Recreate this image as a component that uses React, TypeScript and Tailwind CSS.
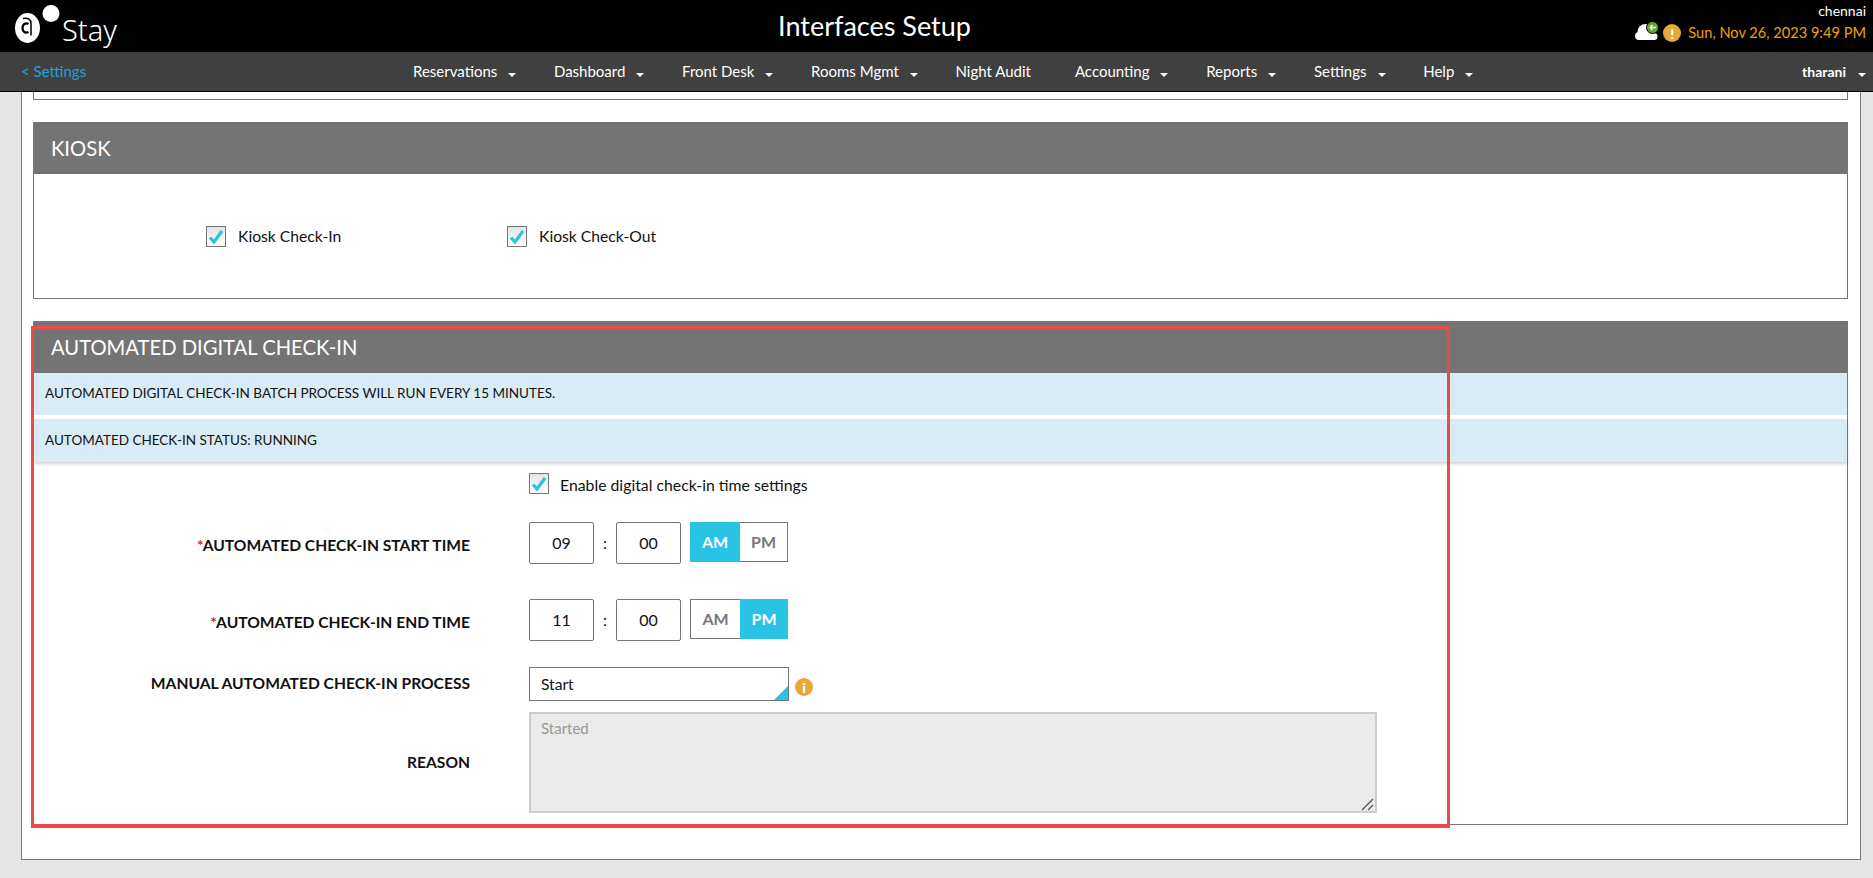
import React from 'react';

const NAV = [
  { label: 'Reservations', caret: true },
  { label: 'Dashboard', caret: true },
  { label: 'Front Desk', caret: true },
  { label: 'Rooms Mgmt', caret: true },
  { label: 'Night Audit', caret: false },
  { label: 'Accounting', caret: true },
  { label: 'Reports', caret: true },
  { label: 'Settings', caret: true },
  { label: 'Help', caret: true },
];

const Caret = () => (
  <span className="inline-block w-0 h-0 border-x-[4px] border-x-transparent border-t-[4px] border-t-white mt-[7px]" />
);

const Logo = () => (
  <svg width="50" height="40" viewBox="0 0 50 40" className="shrink-0">
    <ellipse cx="13.500" cy="24" rx="12.500" ry="15" fill="#fff" />
    <path d="M14.500 20c-3-1.500-6 0-6 4s3 5.500 6 4" fill="none" stroke="#000" strokeWidth="2.400" />
    <path d="M9 14.500c5-1 8 1 8 5v12" fill="none" stroke="#000" strokeWidth="1.500" />
    <circle cx="37" cy="9.500" r="8.500" fill="#fff" />
  </svg>
);

const CheckMark = () => (
  <span className="w-5 h-[21px] border border-[#777] bg-gradient-to-b from-[#e4e4e4] to-white flex items-center justify-center shrink-0">
    <svg width="16" height="14" viewBox="0 0 16 14">
      <path d="M2 7.500l4 4.500 8-11" fill="none" stroke="#29c3e6" strokeWidth="3.200" />
    </svg>
  </span>
);

const SectionHead = ({ title }: { title: string }) => (
  <div className="h-[52px] bg-[#747474] text-white text-[20.200px] flex items-center pl-[17px] leading-none">{title}</div>
);

const Row = ({ label, star, className, children }: { label: string; star?: boolean; className?: string; children: React.ReactNode }) => (
  <div className={'flex ' + (className || '')}>
    <div className={'w-[436px] text-right font-bold text-[15.600px] text-[#111] shrink-0 self-center ' + (star ? 'pt-[5px]' : '')}>
      {star && <span className="text-[#e02020]">*</span>}
      {label}
    </div>
    <div className="ml-[59px] flex items-start">{children}</div>
  </div>
);

const TimeBox = ({ value }: { value: string }) => (
  <div className="w-[65px] h-[42px] border border-[#777] rounded-[2px] flex items-center justify-center text-[16px] text-[#111]">{value}</div>
);

const TimeRow = ({ label, hour, pm, className }: { label: string; hour: string; pm?: boolean; className?: string }) => (
  <Row label={label} star className={className}>
    <TimeBox value={hour} />
    <span className="w-[22px] h-[42px] flex items-center justify-center text-[16px] text-[#111]">:</span>
    <TimeBox value="00" />
    <div className="ml-[9px] flex h-10 text-[16px] font-bold">
      {pm ? (
        <>
          <span className="w-[50px] border border-r-0 border-[#777] text-[#777] flex items-center justify-center">AM</span>
          <span className="w-[48px] bg-[#29c3e6] text-white flex items-center justify-center">PM</span>
        </>
      ) : (
        <>
          <span className="w-[50px] bg-[#29c3e6] text-white flex items-center justify-center">AM</span>
          <span className="w-[48px] border border-l-0 border-[#777] text-[#777] flex items-center justify-center">PM</span>
        </>
      )}
    </div>
  </Row>
);

export default function App() {
  return (
    <div className="h-screen overflow-hidden flex flex-col bg-[#e5e5e5] font-[Lato,sans-serif]">
      {/* Top bar */}
      <div className="h-[52px] bg-black flex items-start relative shrink-0">
        <div className="flex items-start pl-[14px] pt-[4px] w-[300px]">
          <Logo />
          <span className="ml-[-2px] mt-[8px] text-white text-[29px] leading-[36px] font-['Noto_Sans',sans-serif] font-light">Stay</span>
        </div>
        <div className="flex-1 text-center text-white text-[27px] leading-[52px]">Interfaces Setup</div>
        <div className="w-[424px] pr-[7px] flex flex-col items-end text-[14.600px]">
          <span className="text-white text-[14px] leading-[20px] mt-[1px]">chennai</span>
          <div className="flex items-center h-[22px] mt-[1px]">
            <svg width="28" height="22" viewBox="0 0 28 22" className="mr-[1px]">
              <circle cx="5" cy="14" r="4" fill="#fff" />
              <circle cx="11.500" cy="10" r="8" fill="#fff" />
              <circle cx="20" cy="14.500" r="3.500" fill="#fff" />
              <rect x="5" y="12" width="15" height="6" fill="#fff" />
              <circle cx="18.500" cy="5.500" r="6" fill="#5fa82c" stroke="#000" strokeWidth="1" />
              <path d="M22 5.500h-6M18.500 3L16 5.500 18.500 8" fill="none" stroke="#fff" strokeWidth="1.300" />
            </svg>
            <span className="w-[18px] h-[18px] rounded-full bg-[#e8a838] text-white text-[14px] font-black flex items-center justify-center">!</span>
            <span className="ml-[7px] text-[#f0a000]">Sun, Nov 26, 2023 9:49 PM</span>
          </div>
        </div>
      </div>

      {/* Nav */}
      <div className="h-[40px] bg-[#404040] border-b border-black flex items-center shrink-0 text-[15px] text-white relative">
        <div className="pl-[21px] w-[413px] text-[#1ca3d6] text-[15px]">&lt; Settings</div>
        <div className="flex items-center">
          {NAV.map((n) => (
            <div key={n.label} className={n.caret ? 'flex items-center gap-[11px] mr-[37.700px]' : 'flex items-center mr-[44px]'}>
              <span>{n.label}</span>
              {n.caret && <Caret />}
            </div>
          ))}
        </div>
        <div className="ml-auto flex items-center gap-[12px] pr-[7px]">
          <span className="font-bold text-[14px]">tharani</span>
          <Caret />
        </div>
      </div>

      {/* Page */}
      <div className="flex-1 min-h-0 pl-[21px] pr-[12px]">
        <div className="h-[768px] bg-white border-x border-b border-[#777] pl-[11px] pr-[12px]">
          <div className="h-[8px] border-x border-b border-[#777]" />

          <div className="mt-[22px] h-[177px] border-x border-b border-[#777] flex flex-col">
            <SectionHead title="KIOSK" />
            <div className="flex-1 flex items-start pt-[51px] pl-[172px] text-[15.700px] text-[#111]">
              <div className="flex items-center gap-[12px] w-[301px]">
                <CheckMark />
                <span>Kiosk Check-In</span>
              </div>
              <div className="flex items-center gap-[12px]">
                <CheckMark />
                <span>Kiosk Check-Out</span>
              </div>
            </div>
          </div>

          <div className="relative mt-[22px] h-[504px] border-x border-b border-[#777]">
            <SectionHead title="AUTOMATED DIGITAL CHECK-IN" />
            <div className="h-[42px] bg-[#d9ebf5] flex items-center pl-[11px] pb-[2px] text-[13.500px] text-[#111]">AUTOMATED DIGITAL CHECK-IN BATCH PROCESS WILL RUN EVERY 15 MINUTES.</div>
            <div className="h-[43px] mt-[4px] bg-[#d9ebf5] flex items-center pl-[11px] text-[13.500px] text-[#111] shadow-[0_2px_3px_rgba(0,0,0,0.18)]">AUTOMATED CHECK-IN STATUS: RUNNING</div>

            <div className="h-[21px] pl-[495px] mt-[11px] flex items-center gap-[11px] text-[15.800px] text-[#111]">
              <CheckMark />
              <span className="pt-[2px]">Enable digital check-in time settings</span>
            </div>

            <TimeRow className="mt-[28px]" label="AUTOMATED CHECK-IN START TIME" hour="09" />
            <TimeRow className="mt-[35px]" label="AUTOMATED CHECK-IN END TIME" hour="11" pm />

            <Row label="MANUAL AUTOMATED CHECK-IN PROCESS" className="mt-[26px]">
              <div className="relative w-[260px] h-[34px] border border-[#777] flex items-center pl-[11px] pt-[1px] text-[15.600px] text-[#111] overflow-hidden">
                Start
                <span className="absolute right-0 bottom-0 w-0 h-0 border-l-[14px] border-l-transparent border-b-[14px] border-b-[#29c3e6]" />
              </div>
              <span className="ml-[6px] mt-[11px] w-[18px] h-[18px] rounded-full bg-[#e8a838] text-white text-[14px] font-black flex items-center justify-center">i</span>
            </Row>

            <Row label="REASON" className="mt-[11px]">
              <div className="relative">
                <textarea
                  readOnly
                  value="Started"
                  className="w-[848px] h-[101px] bg-[#eaeaea] border-2 border-[#ccc] px-[10px] py-[3px] text-[15px] text-[#999] outline-none block resize-none"
                />
                <svg width="14" height="14" viewBox="0 0 14 14" className="absolute right-[2px] bottom-[1px] pointer-events-none">
                  <path d="M1 12L12 1M7 12l5-5" fill="none" stroke="#555" strokeWidth="1.300" />
                </svg>
              </div>
            </Row>

            {/* annotation box */}
            <div className="absolute left-[-3px] top-[5px] w-[1419px] h-[502px] border-x-[3px] border-y-4 border-[#e84c4a] pointer-events-none" />
          </div>
        </div>
      </div>
    </div>
  );
}
